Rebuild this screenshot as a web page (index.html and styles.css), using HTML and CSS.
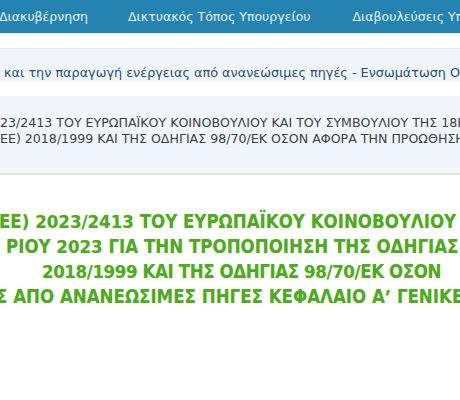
FILE: index.html
```html
<!DOCTYPE html>
<html lang="el">
<head>
<meta charset="utf-8">
<link rel="stylesheet" href="styles.css">
</head>
<body>
<nav class="topnav">
  <a class="nav-item first">Διακυβέρνηση</a>
  <a class="nav-item">Δικτυακός Τόπος Υπουργείου</a>
  <a class="nav-item">Διαβουλεύσεις Υπουργείου</a>
</nav>
<div class="breadcrumb">και την παραγωγή ενέργειας από ανανεώσιμες πηγές - Ενσωμάτωση Οδηγίας</div>
<div class="summary">
  <p>23/2413 ΤΟΥ ΕΥΡΩΠΑΪΚΟΥ ΚΟΙΝΟΒΟΥΛΙΟΥ ΚΑΙ ΤΟΥ ΣΥΜΒΟΥΛΙΟΥ ΤΗΣ 18ΗΣ</p>
  <p>ΕΕ) 2018/1999 ΚΑΙ ΤΗΣ ΟΔΗΓΙΑΣ 98/70/ΕΚ ΟΣΟΝ ΑΦΟΡΑ ΤΗΝ ΠΡΟΩΘΗΣΗ</p>
</div>
<h1 class="title">
  <span class="l1">ΕΕ) 2023/2413 ΤΟΥ ΕΥΡΩΠΑΪΚΟΥ ΚΟΙΝΟΒΟΥΛΙΟΥ ΚΑΙ</span>
  <span class="l2">ΡΙΟΥ 2023 ΓΙΑ ΤΗΝ ΤΡΟΠΟΠΟΙΗΣΗ ΤΗΣ ΟΔΗΓΙΑΣ (ΕΕ)</span>
  <span class="l3">2018/1999 ΚΑΙ ΤΗΣ ΟΔΗΓΙΑΣ 98/70/ΕΚ ΟΣΟΝ</span>
  <span class="l4">Σ ΑΠΟ ΑΝΑΝΕΩΣΙΜΕΣ ΠΗΓΕΣ ΚΕΦΑΛΑΙΟ Α’ ΓΕΝΙΚΕΣ</span>
</h1>
</body>
</html>
```
FILE: styles.css
```css
html, body {
  margin: 0;
  padding: 0;
  background: #ffffff;
  overflow: hidden;
  width: 460px;
  height: 400px;
}
body {
  font-family: "DejaVu Sans", Verdana, sans-serif;
}
.topnav {
  display: flex;
  align-items: center;
  height: 33px;
  background: #2583b1;
  white-space: nowrap;
  overflow: hidden;
  border-bottom: 1px solid #e6eef2;
}
.nav-item {
  color: #e4f3fb;
  font-size: 12.5px;
  margin-right: 42px;
  flex: none;
}
.nav-item.first {
  margin-left: -1px;
  margin-right: 40px;
}
.breadcrumb {
  margin-top: 14px;
  height: 33px;
  background: #eef6fb;
  color: #2b4d73;
  font-size: 12.8px;
  line-height: 48px;
  padding-left: 4px;
  white-space: nowrap;
  overflow: hidden;
  border-top: 1px solid #e3eef5;
}
.summary {
  margin-top: 14px;
  background: #f0f6fb;
  padding: 19px 0 26px 0;
  border-bottom: 2px solid #e2e2e2;
  color: #3a3f44;
  font-size: 12.6px;
  white-space: nowrap;
  overflow: hidden;
}
.summary p {
  margin: 0;
  line-height: 16px;
}
.title {
  margin: 34px 0 0 0;
  font-family: "DejaVu Sans Condensed", "DejaVu Sans", sans-serif;
  font-size: 18.5px;
  font-weight: bold;
  color: #4ea82c;
  line-height: 25px;
  text-shadow: 0 0 1px #c8e86a;
  white-space: nowrap;
}
.title span {
  display: block;
}
.title .l1 { margin-left: -1px; }
.title .l2 { margin-left: 6px; }
.title .l3 { margin-left: 42px; letter-spacing: -0.4px; }
.title .l4 { margin-left: -4px; }
```
